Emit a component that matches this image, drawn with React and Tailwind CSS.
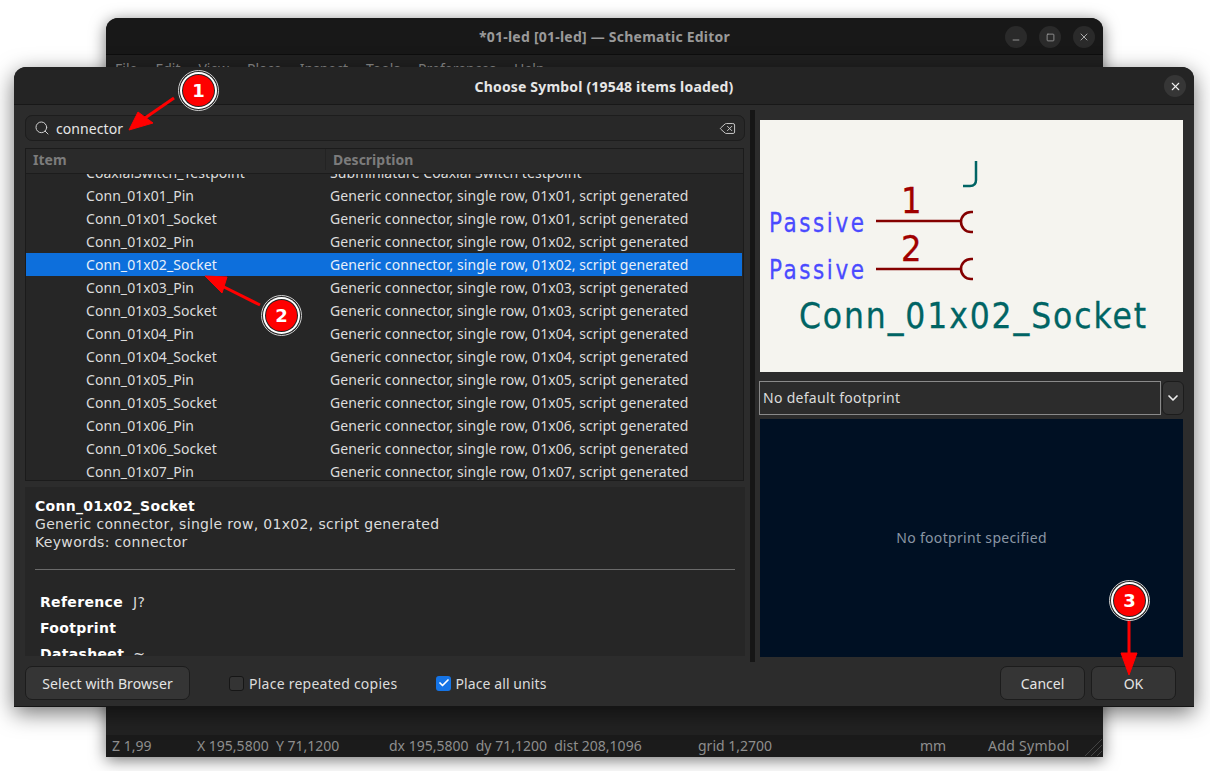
import React from 'react';
import { Search, Delete, X, Minus, Square, ChevronDown, Check } from 'lucide-react';

const ui = "font-['Noto_Sans',sans-serif]";
const rows = [
  ['CoaxialSwitch_Testpoint', 'Subminiature Coaxial Switch testpoint'],
  ['Conn_01x01_Pin', 'Generic connector, single row, 01x01, script generated'],
  ['Conn_01x01_Socket', 'Generic connector, single row, 01x01, script generated'],
  ['Conn_01x02_Pin', 'Generic connector, single row, 01x02, script generated'],
  ['Conn_01x02_Socket', 'Generic connector, single row, 01x02, script generated'],
  ['Conn_01x03_Pin', 'Generic connector, single row, 01x03, script generated'],
  ['Conn_01x03_Socket', 'Generic connector, single row, 01x03, script generated'],
  ['Conn_01x04_Pin', 'Generic connector, single row, 01x04, script generated'],
  ['Conn_01x04_Socket', 'Generic connector, single row, 01x04, script generated'],
  ['Conn_01x05_Pin', 'Generic connector, single row, 01x05, script generated'],
  ['Conn_01x05_Socket', 'Generic connector, single row, 01x05, script generated'],
  ['Conn_01x06_Pin', 'Generic connector, single row, 01x06, script generated'],
  ['Conn_01x06_Socket', 'Generic connector, single row, 01x06, script generated'],
  ['Conn_01x07_Pin', 'Generic connector, single row, 01x07, script generated'],
];

function Badge({ n, className }) {
  return (
    <div className={`absolute w-[41px] h-[41px] rounded-full border border-[#cfcfcf] bg-[#222] p-px ${className}`}>
      <div className="w-full h-full rounded-full bg-white p-[2px]">
        <div className="w-full h-full rounded-full bg-[#222] p-px">
          <div className="w-full h-full rounded-full bg-[#fe0000] flex items-center justify-center text-white text-[18px] font-bold font-['DejaVu_Sans',sans-serif]">{n}</div>
        </div>
      </div>
    </div>
  );
}

function Btn({ children, className }) {
  return (
    <div className={`h-[34px] flex items-center justify-center bg-[#353535] border border-[#1c1c1c] rounded-[7px] text-[14px] text-[#e4e4e4] ${className}`}>{children}</div>
  );
}

// KiCad's stroke font is tall and narrow with wide gaps, so the glyphs get squeezed in x
function StrokeText({ x, y, size, width, fill, sx = 0.74, children }) {
  return (
    <text transform={`translate(${x} ${y}) scale(${sx} 1)`} fontSize={size} fill={fill} stroke={fill} strokeWidth="0.3" textLength={width / sx} lengthAdjust="spacing">{children}</text>
  );
}

function Symbol() {
  const teal = '#006464', red = '#840000', pin = '#a00000', blue = '#4a4aff';
  return (
    <svg viewBox="0 0 423 252" className="w-full h-full">
      <g fontFamily="'DejaVu Sans', sans-serif">
        <StrokeText x={9} y={112} size={27} width={95} sx={0.8} fill={blue}>Passive</StrokeText>
        <StrokeText x={9} y={159} size={27} width={95} sx={0.8} fill={blue}>Passive</StrokeText>
        <StrokeText x={141} y={93} size={36} width={20} sx={0.9} fill={pin}>1</StrokeText>
        <StrokeText x={141} y={141} size={36} width={20} sx={0.9} fill={pin}>2</StrokeText>
        <StrokeText x={39} y={208} size={35} width={347} sx={0.9} fill={teal}>Conn_01x02_Socket</StrokeText>
      </g>
      <path d="M216 41 V60 Q216 66 210 66 H203" fill="none" stroke={teal} strokeWidth="2.5" />
      <path d="M116 101 H202 M213 92 H211 A10 10 0 0 0 211 112 H213" fill="none" stroke={red} strokeWidth="2.6" />
      <path d="M116 149 H202 M213 139 H211 A10 10 0 0 0 211 159 H213" fill="none" stroke={red} strokeWidth="2.6" />
    </svg>
  );
}

export default function App() {
  return (
    <div className={`relative w-[1210px] h-[771px] overflow-hidden bg-white ${ui}`}>
      {/* schematic editor behind the dialog */}
      <div className="absolute left-[106px] top-[18px] w-[997px] h-[739px] flex flex-col rounded-t-[12px] overflow-hidden bg-[#222] shadow-[0_3px_16px_rgba(0,0,0,0.55)]">
        <div className="relative h-[37px] shrink-0 bg-[#181818] border-b border-[#0e0e0e] flex items-center justify-center pt-[1px] text-[14px] tracking-[0.23px] font-bold text-[#9a9a9a]">
          *01-led [01-led] — Schematic Editor
          <div className="absolute right-[8px] top-[8px] flex gap-3">
            <div className="w-[22px] h-[22px] rounded-full bg-[#2a2a2a] flex items-center justify-center"><Minus size={10} className="text-[#aaa] mt-[6px]" /></div>
            <div className="w-[22px] h-[22px] rounded-full bg-[#2a2a2a] flex items-center justify-center"><Square size={9} className="text-[#aaa]" /></div>
            <div className="w-[22px] h-[22px] rounded-full bg-[#2a2a2a] flex items-center justify-center"><X size={12} className="text-[#aaa]" /></div>
          </div>
        </div>
        <div className="h-[22px] shrink-0 bg-[#202020] flex items-center gap-[18px] pl-[9px] pt-[4px] text-[14px] text-[#8a8a8a]">
          <span>File</span><span>Edit</span><span>View</span><span>Place</span><span>Inspect</span><span>Tools</span><span>Preferences</span><span>Help</span>
        </div>
        <div className="flex-1" />
        <div className="relative h-[22px] shrink-0 bg-[#1b1b1b] flex items-center pl-[6px] pb-[1px] text-[14px] text-[#8e8e8e]">
          <span className="w-[85px]">Z 1,99</span>
          <span className="w-[192px]">X 195,5800&nbsp; Y 71,1200</span>
          <span className="w-[309px]">dx 195,5800&nbsp; dy 71,1200&nbsp; dist 208,1096</span>
          <span className="w-[222px]">grid 1,2700</span>
          <span className="w-[68px]">mm</span>
          <span className="tracking-[0.3px]">Add Symbol</span>
          <svg viewBox="0 0 20 20" className="absolute right-0 bottom-0 w-[20px] h-[20px]" stroke="#444" fill="none"><path d="M2 19 L19 2 M8 19 L19 8 M14 19 L19 14" /></svg>
        </div>
      </div>

      {/* Choose Symbol dialog */}
      <div className="absolute left-[14px] top-[67px] w-[1180px] h-[640px] flex flex-col rounded-t-[12px] overflow-hidden bg-[#2c2c2c] border-b border-[#151515] shadow-[0_6px_22px_rgba(0,0,0,0.55)]">
        <div className="relative h-[38px] shrink-0 bg-[#242424] border-b border-[#181818] flex items-center justify-center pt-[1px] text-[14px] tracking-[0.18px] font-bold text-[#e6e6e6]">
          Choose Symbol (19548 items loaded)
          <div className="absolute right-[8px] top-[8px] w-[22px] h-[22px] rounded-full bg-[#363636] flex items-center justify-center"><X size={13} className="text-[#eee]" /></div>
        </div>

        <div className="flex h-[557px] shrink-0 pl-[11px] pt-[5px]">
          <div className="w-[720px] shrink-0 flex flex-col pt-[5px]">
            <div className="h-[26px] shrink-0 flex items-center bg-[#282828] border border-[#1d1d1d] rounded-[7px] px-[8px] text-[14px] tracking-[0.08px] text-[#e6e6e6]">
              <Search size={16} strokeWidth={1.5} className="text-[#d0d0d0] mr-[6px]" />
              <span className="flex-1">connector</span>
              <Delete size={17} strokeWidth={1.4} className="text-[#c8c8c8]" />
            </div>
            <div className="h-[333px] w-[719px] shrink-0 mt-[7px] bg-[#262626] border border-[#1b1b1b] overflow-hidden flex flex-col">
              <div className="h-[25px] shrink-0 flex items-center bg-[#2a2a2a] border-b border-[#1c1c1c] pb-[3px] text-[14px] font-bold text-[#7c7c7c]">
                <div className="w-[299px] pl-[7px]">Item</div>
                <div className="flex-1 border-l border-[#232323] pl-[7px]">Description</div>
              </div>
              <div className="flex-1 overflow-hidden">
                <div className="-mt-[13px] mr-px text-[14px] tracking-[0.06px] text-[#dcdcdc]">
                  {rows.map(([a, b], i) => (
                    <div key={a} className={`h-[23px] flex items-center ${i === 4 ? 'bg-[#0d6fdc] text-[#e8f0fa]' : ''}`}>
                      <span className="w-[304px] shrink-0 pl-[60px]">{a}</span>
                      <span>{b}</span>
                    </div>
                  ))}
                </div>
              </div>
            </div>
            <div className="h-[169px] shrink-0 mt-[6px] bg-[#262626] pt-[10px] overflow-hidden font-['DejaVu_Sans',sans-serif] text-[14px] tracking-[0.33px] leading-[18px] text-[#dcdcdc]">
              <div className="px-[10px]">
                <div className="font-bold text-white tracking-[0.3px]">Conn_01x02_Socket</div>
                <div>Generic connector, single row, 01x02, script generated</div>
                <div>Keywords: connector</div>
                <div className="h-px bg-[#6a6a6a] mt-[18px]" />
              </div>
              <div className="px-[15px] mt-[23px] flex flex-col gap-[8px]">
                <div className="h-[18px]"><b className="text-white mr-[10px]">Reference</b>J?</div>
                <div className="h-[18px]"><b className="text-white">Footprint</b></div>
                <div className="h-[18px]"><b className="text-white mr-[9px]">Datasheet</b>~</div>
              </div>
            </div>
          </div>

          <div className="w-[5px] h-[552px] shrink-0 ml-[5px] bg-[#161616]" />

          <div className="w-[425px] shrink-0 ml-[4px] flex flex-col pt-[10px]">
            <div className="h-[252px] ml-px w-[423px] shrink-0 bg-[#f5f4ef]"><Symbol /></div>
            <div className="flex h-[34px] shrink-0 mt-[9px]">
              <div className="w-[402px] flex items-center pl-[3px] pb-[1px] border border-[#8a8a8a] text-[14px] tracking-[0.3px] text-[#dcdcdc]">No default footprint</div>
              <div className="w-[22px] ml-px bg-[#333] border border-[#1c1c1c] rounded-[6px] flex items-center justify-center"><ChevronDown size={16} strokeWidth={2.5} className="text-[#eee]" /></div>
            </div>
            <div className="h-[238px] ml-px w-[423px] shrink-0 mt-[4px] pb-[2px] bg-[#001023] flex items-center justify-center text-[14px] tracking-[0.33px] text-[#8a96a3]">No footprint specified</div>
          </div>
        </div>

        <div className="flex items-center pl-[11px] pt-[4px] text-[14px] text-[#dcdcdc]">
          <Btn className="w-[165px] tracking-[0.1px]">Select with Browser</Btn>
          <div className="w-[15px] h-[15px] ml-[39px] bg-[#343434] border border-[#161616] rounded-[3px]" />
          <span className="ml-[5px] tracking-[0.25px]">Place repeated copies</span>
          <div className="w-[15px] h-[15px] ml-[39px] bg-[#1574e6] rounded-[3px] flex items-center justify-center"><Check size={12} strokeWidth={3.5} className="text-white" /></div>
          <span className="ml-[4px] tracking-[0.1px]">Place all units</span>
          <Btn className="w-[85px] ml-auto">Cancel</Btn>
          <Btn className="w-[85px] ml-[6px] mr-[18px]">OK</Btn>
        </div>
      </div>

      {/* callouts */}
      <svg viewBox="0 0 1210 771" className="absolute inset-0 w-[1210px] h-[771px] pointer-events-none">
        <g fill="#f00" stroke="#f00">
          <path d="M174 98 L145 118" strokeWidth="3" fill="none" />
          <path d="M129 130 L138 112 L153 123 Z" strokeWidth="1" />
          <path d="M260 305 L220 285" strokeWidth="3" fill="none" />
          <path d="M205 276 L227 277 L222 293 Z" strokeWidth="1" />
          <path d="M1129 620 V655" strokeWidth="3" fill="none" />
          <path d="M1129 675 L1121 653 H1137 Z" strokeWidth="1" />
        </g>
      </svg>
      <Badge n="1" className="left-[178px] top-[70px]" />
      <Badge n="2" className="left-[261px] top-[295px]" />
      <Badge n="3" className="left-[1109px] top-[580px]" />
    </div>
  );
}
